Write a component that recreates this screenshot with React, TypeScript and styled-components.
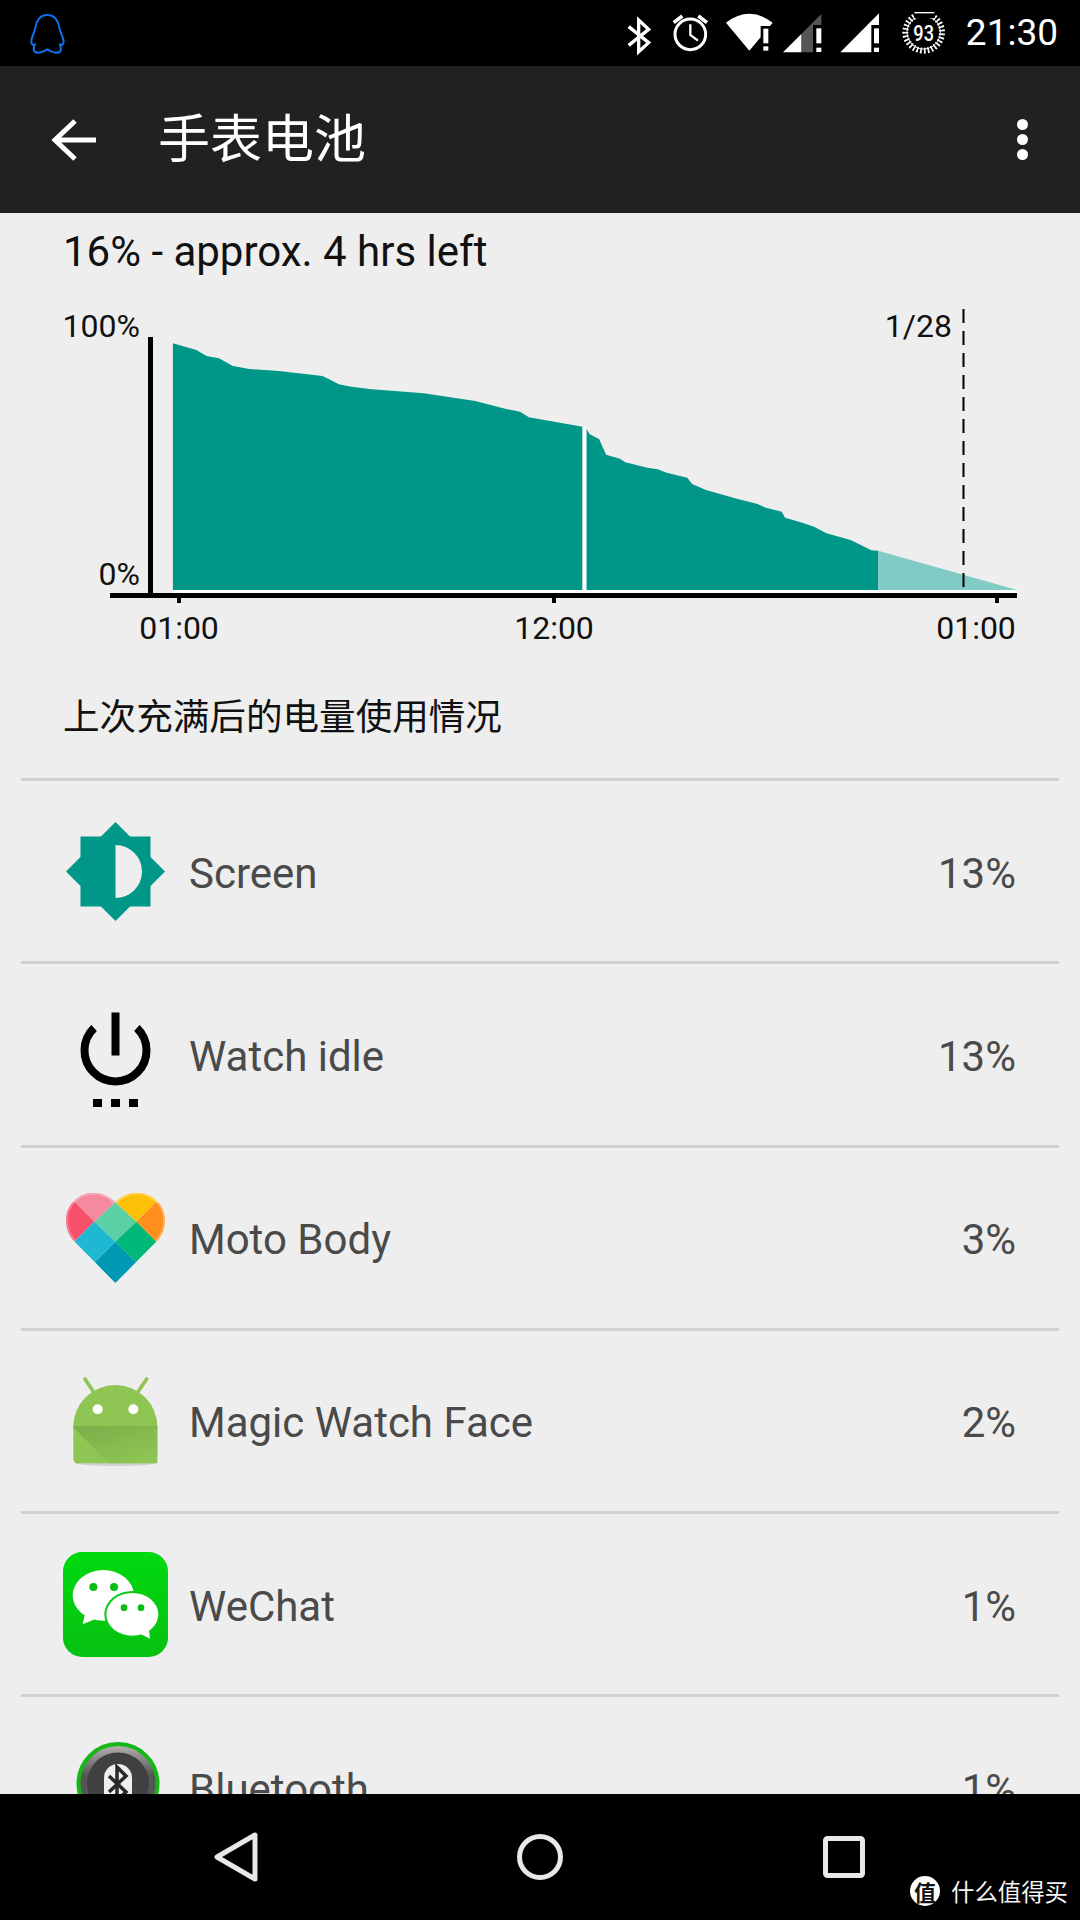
import styled, { createGlobalStyle } from "styled-components";

const GlobalStyle = createGlobalStyle`
  html, body {
    margin: 0;
    padding: 0;
    background: #000;
  }
`;

const Phone = styled.div`
  width: 1080px;
  height: 1920px;
  display: flex;
  flex-direction: column;
  overflow: hidden;
  position: relative;
  font-family: Roboto, "Noto Sans CJK SC", sans-serif;
`;

const StatusBar = styled.div`
  height: 66px;
  flex: none;
  display: flex;
  align-items: center;
  background: #000;
  padding: 0 22px 0 20px;
`;

const StatusIcons = styled.div`
  display: flex;
  margin-left: auto;
`;

const StatusIcon = styled.svg`
  display: block;
  height: 66px;
`;

const Clock = styled.span`
  margin-left: 13px;
  color: #fff;
  font-size: 37px;
  line-height: 66px;
`;

const Toolbar = styled.div`
  height: 147px;
  flex: none;
  display: flex;
  align-items: center;
  background: #212121;
  padding: 0 52px 0 50px;
`;

const Title = styled.h1`
  margin: 0 0 8px 58px;
  color: #fff;
  font-size: 52px;
  font-weight: 400;
  font-family: "Noto Sans CJK SC", sans-serif;
`;

const MoreDots = styled.div`
  margin-left: auto;
  display: flex;
  flex-direction: column;
  gap: 4px;
`;

const Dot = styled.span`
  width: 11px;
  height: 11px;
  border-radius: 50%;
  background: #fff;
`;

const Content = styled.main`
  flex: 1;
  min-height: 0;
  overflow: hidden;
  background: #eeeeee;
`;

const Summary = styled.div`
  height: 77px;
  display: flex;
  align-items: center;
  padding-left: 63px;
  font-size: 42px;
  color: #111;
`;

const ChartSvg = styled.svg`
  display: block;
`;

const ChartLabel = styled.text`
  font-family: Roboto, sans-serif;
  font-size: 32px;
  fill: #111;
`;

const SectionTitle = styled.div`
  height: 108px;
  margin-bottom: 10px;
  display: flex;
  align-items: center;
  padding-left: 63px;
  font-size: 36.6px;
  color: #111;
  font-family: "Noto Sans CJK SC", sans-serif;
`;

const UsageList = styled.div`
  margin: 0 21px;
`;

const UsageRow = styled.div`
  height: 183.25px;
  box-sizing: border-box;
  border-top: 3px solid #d0d0d0;
  display: flex;
  align-items: center;
  padding: 0 43px 0 42px;
  font-size: 42px;
  color: #4a4a4a;
`;

const RowIcon = styled.svg`
  display: block;
  flex: none;
  width: 105px;
  height: 105px;
`;

const RowLabel = styled.span`
  margin: 4px 0 0 21px;
`;

const RowValue = styled.span`
  margin: 4px 0 0 auto;
`;

const NavBar = styled.nav`
  height: 126px;
  flex: none;
  background: #000;
  display: flex;
  align-items: center;
  justify-content: center;
`;

const NavButton = styled.div`
  width: 304px;
  display: flex;
  justify-content: center;
`;

const Watermark = styled.div`
  position: absolute;
  right: 12px;
  bottom: 12px;
  display: flex;
  align-items: center;
  gap: 11px;
  color: #f4f4f4;
  font-size: 23.4px;
  font-family: "Noto Sans CJK SC", sans-serif;
`;

const WatermarkBadge = styled.span`
  width: 30px;
  height: 30px;
  border-radius: 50%;
  background: #fff;
  color: #111;
  font-size: 22px;
  font-weight: 700;
  line-height: 30px;
  text-align: center;
`;

// chart points are read off the crop, which is 1.452x wide and 3x tall
const pts = (list: number[][]) =>
  list.map(([x, y]) => `${(x / 1.452).toFixed(1)},${(y / 3).toFixed(1)}`).join(" ");

const firstCurve = [
  [251, 900], [251, 160], [285, 180], [300, 198], [318, 205], [338, 228], [362, 237],
  [405, 243], [468, 258], [478, 268], [492, 283], [510, 290], [540, 298], [615, 310],
  [690, 333], [735, 357], [755, 365], [768, 382], [846, 410], [846, 900],
];

const secondCurve = [
  [851, 900], [851, 415], [856, 432], [870, 448], [880, 494], [900, 506], [908, 517],
  [940, 533], [955, 538], [968, 548], [998, 563], [1005, 582], [1025, 600], [1070, 626],
  [1100, 642], [1112, 653], [1135, 665], [1140, 683], [1165, 698], [1182, 710], [1200, 730],
  [1235, 750], [1250, 765], [1265, 781], [1275, 782], [1275, 900],
];

const projection = [[1275, 900], [1275, 782], [1477, 900]];

function BatteryChart() {
  return (
    <ChartSvg width={1080} height={370} viewBox="0 0 1080 370">
      <polygon points={pts(firstCurve)} fill="#009688" />
      <polygon points={pts(secondCurve)} fill="#009688" />
      <polygon points={pts(projection)} fill="#80cbc4" />
      <rect x={582.5} y={137} width={4} height={163} fill="#fff" />
      <rect x={173} y={300} width={844} height={3} fill="#fff" />
      <rect x={148} y={47} width={5} height={256} fill="#000" />
      <rect x={110} y={303} width={907} height={5} fill="#000" />
      <rect x={177} y={308} width={4} height={5} fill="#000" />
      <rect x={552} y={308} width={4} height={5} fill="#000" />
      <rect x={995} y={308} width={4} height={5} fill="#000" />
      <line x1={963.5} y1={19} x2={963.5} y2={300} stroke="#000" strokeWidth={2} strokeDasharray="14 8" />
      <ChartLabel x={140} y={47} textAnchor="end">100%</ChartLabel>
      <ChartLabel x={140} y={295} textAnchor="end">0%</ChartLabel>
      <ChartLabel x={952} y={47} textAnchor="end">1/28</ChartLabel>
      <ChartLabel x={179} y={349} textAnchor="middle">01:00</ChartLabel>
      <ChartLabel x={554} y={349} textAnchor="middle">12:00</ChartLabel>
      <ChartLabel x={976} y={349} textAnchor="middle">01:00</ChartLabel>
    </ChartSvg>
  );
}

function ScreenIcon() {
  return (
    <RowIcon viewBox="0 0 105 105">
      <rect x={17.5} y={17.5} width={70} height={70} fill="#009688" />
      <rect x={17.5} y={17.5} width={70} height={70} fill="#009688" transform="rotate(45 52.5 52.5)" />
      <path d="M52.5 26 A26.5 26.5 0 0 1 52.5 79 Z" fill="#eeeeee" />
    </RowIcon>
  );
}

function IdleIcon() {
  return (
    <RowIcon viewBox="0 0 105 105">
      <path d="M31.1 26 A31 31 0 1 0 73.9 26" fill="none" stroke="#000" strokeWidth={8} />
      <rect x={48.5} y={10.5} width={8} height={43} fill="#000" />
      <rect x={30} y={97} width={9} height={9} fill="#000" />
      <rect x={48} y={97} width={9} height={9} fill="#000" />
      <rect x={66} y={97} width={9} height={9} fill="#000" />
    </RowIcon>
  );
}

function MotoBodyIcon() {
  return (
    <RowIcon viewBox="69 45 315 315">
      <defs>
        <clipPath id="heart">
          <path d="M226 340 L104 216 C85 195 78 175 78 150 C78 105 115 68 160 68 C190 68 212 82 226 97 C240 82 262 68 292 68 C337 68 375 105 375 150 C375 175 368 195 349 216 Z" />
        </clipPath>
      </defs>
      <g clipPath="url(#heart)">
        <polygon points="60,40 226,40 226,97 163,155 105,97 60,97" fill="#f5899f" />
        <polygon points="60,97 105,97 163,155 103,215 60,215" fill="#f6506a" />
        <polygon points="226,40 400,40 347,97 289,155 226,97" fill="#ffc107" />
        <polygon points="347,97 400,97 400,215 349,215 289,155" fill="#ff8f1c" />
        <polygon points="226,97 289,155 226,215 163,155" fill="#5ccfa4" />
        <polygon points="163,155 226,215 165,277 103,215" fill="#1fb8d2" />
        <polygon points="289,155 349,215 288,277 226,215" fill="#00b878" />
        <polygon points="226,215 288,277 226,340 165,277" fill="#0099b4" />
        <path
          d="M226 97 C212 82 190 68 160 68 C115 68 78 105 78 150 C78 175 85 195 104 216 M226 97 C240 82 262 68 292 68 C337 68 375 105 375 150 C375 175 368 195 349 216"
          fill="none"
          stroke="#fff"
          strokeOpacity={0.25}
          strokeWidth={12}
        />
      </g>
    </RowIcon>
  );
}

function AndroidIcon() {
  return (
    <RowIcon viewBox="69 594 315 315">
      <defs>
        <linearGradient id="fold" x1="0" y1="0" x2="0.75" y2="1">
          <stop offset="0" stopColor="#7aae4a" />
          <stop offset="1" stopColor="#8fc553" />
        </linearGradient>
      </defs>
      <ellipse cx={226} cy={878} rx={124} ry={10} fill="#000" opacity={0.12} />
      <path d="M135 627 L162 668 M320 627 L292 668" stroke="#8fc553" strokeWidth={11} strokeLinecap="round" />
      <path
        d="M100 770 A126 125 0 0 1 352 770 L352 865 Q352 880 337 880 L115 880 Q100 880 100 865 Z"
        fill="#8fc553"
      />
      <polygon points="100,772 352,772 352,880 205,880" fill="url(#fold)" />
      <rect x={100} y={768} width={252} height={5} fill="#7fb04b" />
      <circle cx={173} cy={718} r={15} fill="#fff" />
      <circle cx={280} cy={718} r={15} fill="#fff" />
    </RowIcon>
  );
}

function WeChatIcon() {
  return (
    <RowIcon viewBox="69 95 315 315">
      <defs>
        <linearGradient id="wechat" x1="0" y1="0" x2="0" y2="1">
          <stop offset="0" stopColor="#00d90f" />
          <stop offset="1" stopColor="#07c012" />
        </linearGradient>
      </defs>
      <rect x={69} y={95} width={315} height={315} rx={58} fill="url(#wechat)" />
      <ellipse cx={190} cy={225} rx={92} ry={76} fill="#fff" />
      <polygon points="135,280 128,312 175,292" fill="#fff" />
      <circle cx={160} cy={200} r={12} fill="#09bd14" />
      <circle cx={222} cy={200} r={12} fill="#09bd14" />
      <ellipse cx={277} cy={282} rx={84} ry={70} fill="#0ac916" />
      <ellipse cx={277} cy={282} rx={78} ry={64} fill="#fff" />
      <polygon points="300,340 330,355 326,322" fill="#fff" />
      <circle cx={252} cy={262} r={10} fill="#09bd14" />
      <circle cx={303} cy={262} r={10} fill="#09bd14" />
    </RowIcon>
  );
}

function BluetoothAppIcon() {
  return (
    <RowIcon viewBox="0 0 105 105">
      <defs>
        <linearGradient id="btRim" x1="0" y1="0" x2="0" y2="1">
          <stop offset="0" stopColor="#b5b5b5" />
          <stop offset="0.4" stopColor="#555" />
        </linearGradient>
      </defs>
      <circle cx={55} cy={48.5} r={39.5} fill="url(#btRim)" stroke="#14b814" strokeWidth={4} />
      <circle cx={55} cy={48.5} r={31} fill="#404040" />
      <rect x={41} y={29} width={28} height={50} rx={14} fill="#efefef" />
      <path d="M46 41 L63 57 L54 65 L54 32 L63 41 L46 57" fill="none" stroke="#2a2a2a" strokeWidth={3.5} />
    </RowIcon>
  );
}

const usage = [
  { name: "Screen", value: "13%", icon: <ScreenIcon /> },
  { name: "Watch idle", value: "13%", icon: <IdleIcon /> },
  { name: "Moto Body", value: "3%", icon: <MotoBodyIcon /> },
  { name: "Magic Watch Face", value: "2%", icon: <AndroidIcon /> },
  { name: "WeChat", value: "1%", icon: <WeChatIcon /> },
  { name: "Bluetooth", value: "1%", icon: <BluetoothAppIcon /> },
];

export default function App() {
  return (
    <Phone>
      <GlobalStyle />
      <StatusBar>
        <svg width={60} height={55} viewBox="0 0 180 165">
          <path
            d="M82 27 C60 27 48 45 46 65 C44 80 35 90 34 105 C34 118 40 120 45 113 C42 125 38 131 44 137 C52 143 68 138 82 130 C96 138 112 143 120 137 C126 131 122 125 119 113 C124 120 131 118 131 105 C129 90 120 80 118 65 C116 45 104 27 82 27 Z"
            fill="none"
            stroke="#0a72ef"
            strokeWidth={6}
          />
        </svg>
        <StatusIcons>
          <StatusIcon width={130 / 3} viewBox="60 0 130 198">
            <path d="M86 80 L146 128 L116 155 L116 60 L146 88 L86 136" fill="none" stroke="#fff" strokeWidth={10} />
          </StatusIcon>
          <StatusIcon width={170 / 3} viewBox="190 0 170 198">
            <circle cx={272} cy={103} r={46} fill="none" stroke="#fff" strokeWidth={9} />
            <path d="M272 73 L272 105 L295 122" fill="none" stroke="#fff" strokeWidth={7} />
            <path d="M222 68 L248 48 M322 68 L296 48" stroke="#fff" strokeWidth={11} />
          </StatusIcon>
          <StatusIcon width={175 / 3} viewBox="360 0 175 198">
            <path d="M448 152 L378 68 Q448 15 518 68 L510 78 L482 78 L482 112 Z" fill="#fff" />
            <rect x={490} y={86} width={15} height={44} fill="#fff" />
            <rect x={490} y={139} width={15} height={13} fill="#fff" />
          </StatusIcon>
          <StatusIcon width={165 / 3} viewBox="535 0 165 198">
            <polygon points="605,102 665,42 665,75 640,75 640,157 605,157" fill="#555" />
            <polygon points="550,157 605,102 605,157" fill="#fff" />
            <rect x={650} y={85} width={15} height={45} fill="#fff" />
            <rect x={650} y={143} width={15} height={13} fill="#fff" />
          </StatusIcon>
          <StatusIcon width={190 / 3} viewBox="700 0 190 198">
            <polygon points="722,157 838,40 838,75 815,75 815,157" fill="#fff" />
            <rect x={823} y={85} width={15} height={45} fill="#fff" />
            <rect x={823} y={143} width={15} height={13} fill="#fff" />
          </StatusIcon>
          <StatusIcon width={170 / 3} viewBox="890 0 170 198">
            <circle
              cx={973}
              cy={97}
              r={55}
              fill="none"
              stroke="#fff"
              strokeWidth={18}
              strokeDasharray="5 6"
              transform="rotate(-66 973 97)"
              pathLength={345}
            />
            <circle cx={973} cy={97} r={50} fill="none" stroke="#fff" strokeWidth={3} />
            <rect x={945} y={28} width={62} height={26} fill="#000" />
            <path d="M945 38 L1005 38" stroke="#fff" strokeWidth={4} />
            <text
              x={973}
              y={122}
              textAnchor="middle"
              fill="#fff"
              fontSize={68}
              fontWeight={500}
              textLength={62}
              lengthAdjust="spacingAndGlyphs"
              fontFamily="Roboto, sans-serif"
            >
              93
            </text>
          </StatusIcon>
        </StatusIcons>
        <Clock>21:30</Clock>
      </StatusBar>

      <Toolbar>
        <svg width={50} height={50} viewBox="0 0 50 50">
          <path d="M46 25 L6 25 M25 6 L5 25 L25 44" fill="none" stroke="#fff" strokeWidth={5} />
        </svg>
        <Title>手表电池</Title>
        <MoreDots>
          <Dot />
          <Dot />
          <Dot />
        </MoreDots>
      </Toolbar>

      <Content>
        <Summary>16% - approx. 4 hrs left</Summary>
        <BatteryChart />
        <SectionTitle>上次充满后的电量使用情况</SectionTitle>
        <UsageList>
          {usage.map((item) => (
            <UsageRow key={item.name}>
              {item.icon}
              <RowLabel>{item.name}</RowLabel>
              <RowValue>{item.value}</RowValue>
            </UsageRow>
          ))}
        </UsageList>
      </Content>

      <NavBar>
        <NavButton>
          <svg width={50} height={56} viewBox="0 0 50 56">
            <path d="M6 28 L44 6 L44 50 Z" fill="none" stroke="#e8e8e8" strokeWidth={5} strokeLinejoin="round" />
          </svg>
        </NavButton>
        <NavButton>
          <svg width={50} height={50} viewBox="0 0 50 50">
            <circle cx={25} cy={25} r={20.5} fill="none" stroke="#e8e8e8" strokeWidth={5} />
          </svg>
        </NavButton>
        <NavButton>
          <svg width={50} height={50} viewBox="0 0 50 50">
            <rect x={6.5} y={6.5} width={37} height={37} rx={2} fill="none" stroke="#e8e8e8" strokeWidth={5} />
          </svg>
        </NavButton>
      </NavBar>

      <Watermark>
        <WatermarkBadge>值</WatermarkBadge>
        什么值得买
      </Watermark>
    </Phone>
  );
}
